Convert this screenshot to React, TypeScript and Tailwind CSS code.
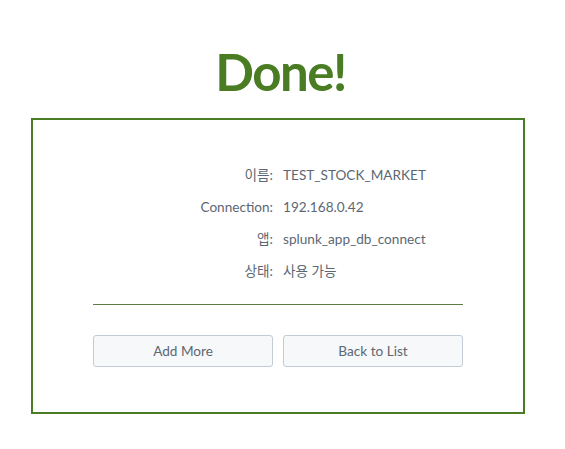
export default function App() {
  const rows: [string, string][] = [
    ['이름:', 'TEST_STOCK_MARKET'],
    ['Connection:', '192.168.0.42'],
    ['앱:', 'splunk_app_db_connect'],
    ['상태:', '사용 가능'],
  ];

  return (
    <div
      className="min-h-[449px] w-[565px] bg-white pt-[40px]"
      style={{ fontFamily: 'Lato, "Noto Sans CJK KR", sans-serif' }}
    >
      <h1 className="ml-[-4px] text-center text-[51px] font-bold leading-[64px] tracking-[-1.5px] text-[#4a7c24]">Done!</h1>
      <div className="ml-[31px] mt-[14px] h-[296px] w-[494px] border-2 border-[#4a7c24] pt-[45px]">
        <div className="mx-auto w-[370px]">
          <div className="flex flex-col gap-[12px]">
            {rows.map(([label, value]) => (
              <div key={label} className="flex h-[20px] items-center gap-[10px] text-[13.6px] text-[#5c6773]">
                <div className="w-[180px] text-right">{label}</div>
                <div>{value}</div>
              </div>
            ))}
          </div>
          <div className="mt-[23px] h-px bg-[#5f7a45]" />
          <div className="mt-[30px] flex gap-[10px]">
            <button className="h-[32px] w-[180px] rounded-[3px] border border-[#c3cbd4] bg-[#f7f8fa] text-[13.6px] text-[#5c6773]">
              Add More
            </button>
            <button className="h-[32px] w-[180px] rounded-[3px] border border-[#c3cbd4] bg-[#f7f8fa] text-[13.6px] text-[#5c6773]">
              Back to List
            </button>
          </div>
        </div>
      </div>
    </div>
  );
}
